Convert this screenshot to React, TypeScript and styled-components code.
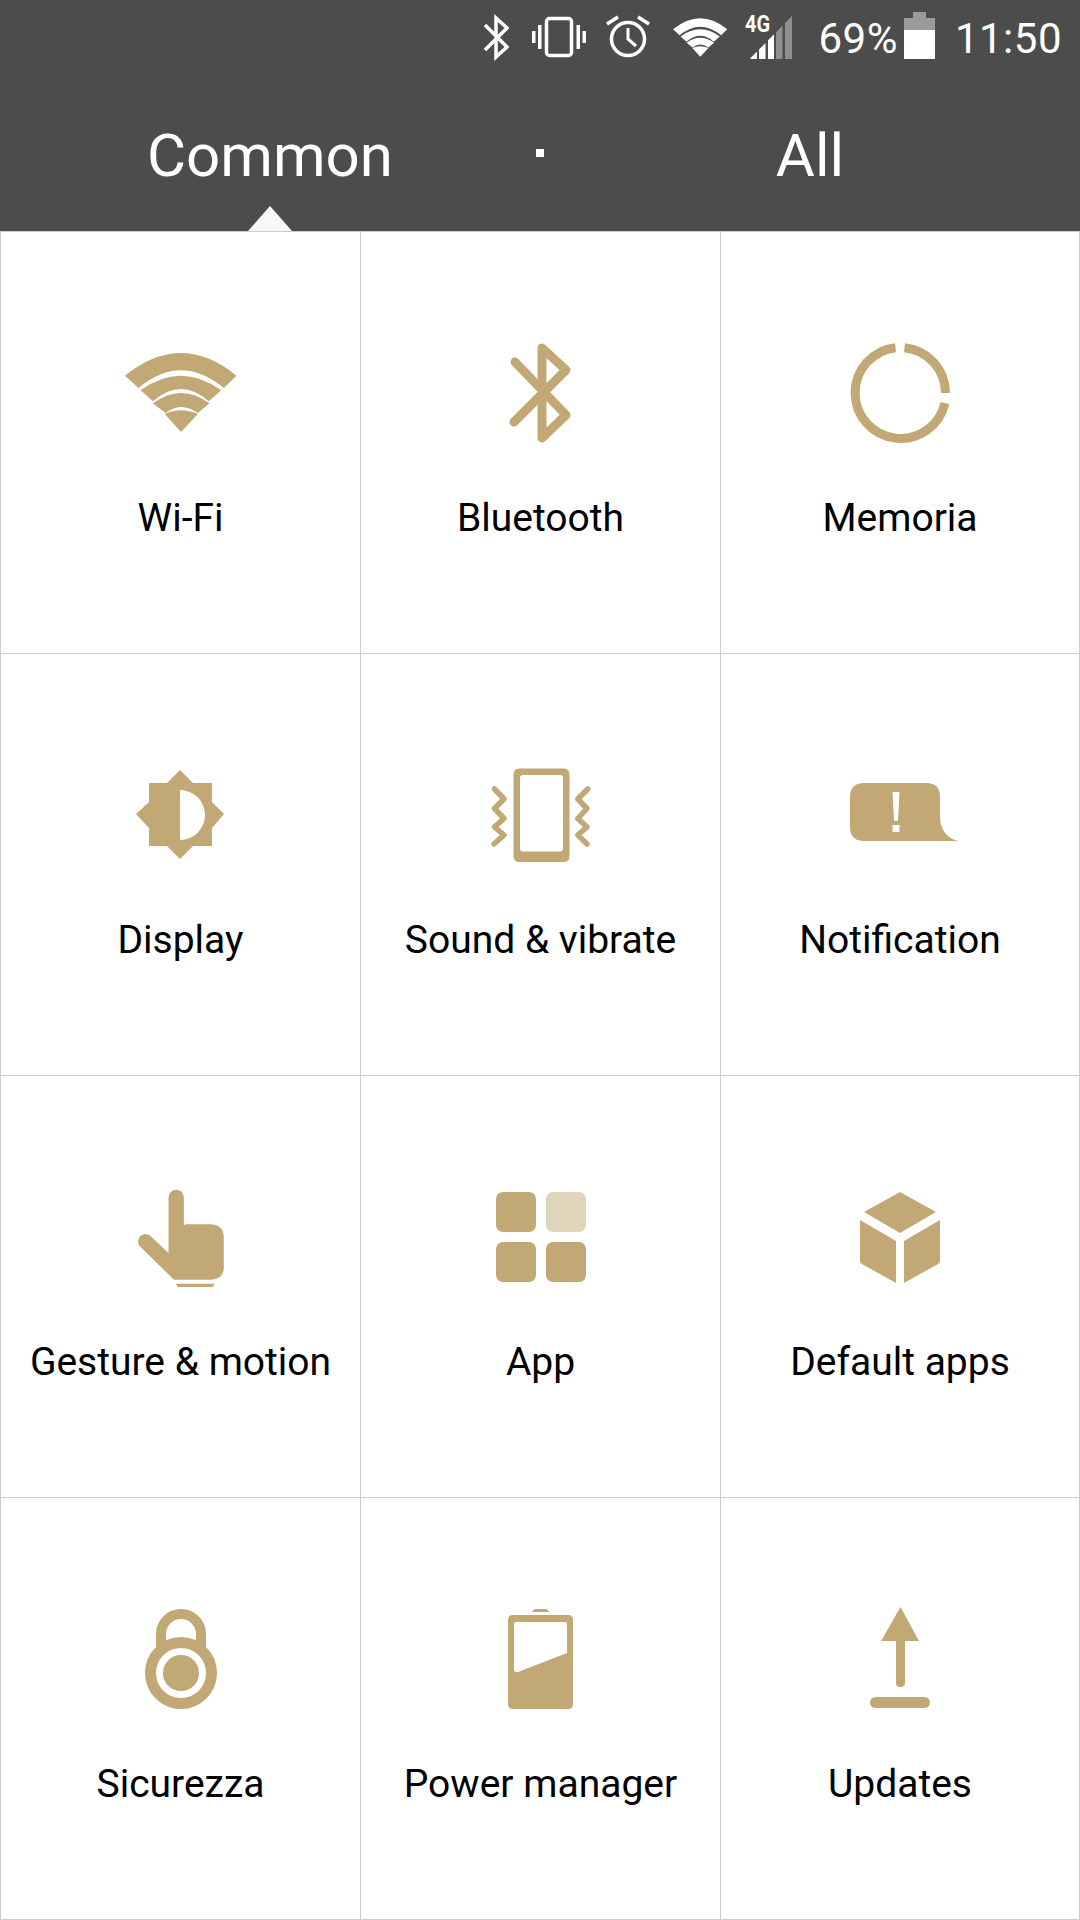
import React from "react";
import styled, { createGlobalStyle } from "styled-components";

const GOLD = "#c1a875";
const GOLD_LIGHT = "#e0d5bb";

const GlobalStyle = createGlobalStyle`
  html, body {
    margin: 0;
    padding: 0;
    background: #fff;
    font-family: Roboto, "Liberation Sans", sans-serif;
  }
`;

const Page = styled.div`
  width: 1080px;
  height: 1920px;
  overflow: hidden;
  background: #fff;
`;

const Header = styled.header`
  position: relative;
  height: 231px;
  background: #4c4c4c;
  color: #fff;
`;

const StatusBar = styled.div`
  display: flex;
  justify-content: flex-end;
  align-items: flex-start;
  height: 74px;
  padding-right: 18px;
`;

const StatusIcon = styled.svg<{ $gap: number }>`
  display: block;
  flex: none;
  height: 74px;
  margin-left: ${(p) => p.$gap}px;
`;

const StatusText = styled.span<{ $gap: number }>`
  display: block;
  margin-left: ${(p) => p.$gap}px;
  font-size: 42px;
  font-weight: 400;
  line-height: 78px;
  letter-spacing: 0.5px;
`;

const Tabs = styled.nav`
  display: grid;
  grid-template-columns: 1fr 1fr;
  position: relative;
  height: 157px;
`;

const Tab = styled.div`
  text-align: center;
  font-size: 60px;
  font-weight: 400;
  line-height: 163px;
`;

const TabDot = styled.span`
  position: absolute;
  left: 536px;
  top: 75px;
  width: 8px;
  height: 8px;
  background: #fff;
`;

const TabPointer = styled.span`
  position: absolute;
  left: 248px;
  bottom: 0;
  width: 44px;
  height: 25px;
  background: #f8f8f8;
  clip-path: polygon(50% 0, 100% 100%, 0 100%);
`;

const Grid = styled.main`
  display: grid;
  grid-template-columns: 360px 360px 359px;
  grid-auto-rows: 422px;
  border-top: 1px solid #cdcdcd;
  border-right: 1px solid #cdcdcd;
`;

const Cell = styled.div`
  display: flex;
  flex-direction: column;
  align-items: center;
  box-sizing: border-box;
  padding-top: 100px;
  border-left: 1px solid #cdcdcd;
  border-bottom: 1px solid #cdcdcd;
`;

const IconSvg = styled.svg.attrs<{ $shift?: number }>((p) => ({
  viewBox: `${1 - (p.$shift ?? 0)} 0 140 120`,
}))<{ $shift?: number }>`
  display: block;
  flex: none;
  width: 140px;
  height: 120px;
  fill: ${GOLD};
`;

const Label = styled.div`
  margin-top: 44px;
  font-size: 39px;
  line-height: 44px;
  color: #000;
  white-space: nowrap;
`;

const WifiBands = () => (
  <g>
    <path d="M15 43.7 Q71 -1.7 126.5 43.7 L113.8 56 Q71 20.6 28.5 56 Z" />
    <path d="M30.5 58.3 Q71 29.1 111.2 58.3 L98.8 69.3 Q71 44.7 43 69.3 Z" />
    <path d="M43 71.3 Q71 50.5 99.5 71.3 L87.8 81 Q71 69 55.5 81 Z" />
    <path d="M54.8 82 Q71 74.6 87.8 82 L71 100 Z" />
  </g>
);

const WifiIcon = () => (
  <IconSvg>
    <WifiBands />
  </IconSvg>
);

const BluetoothIcon = () => (
  <IconSvg>
    <path
      d="M45 30 L96 83 L72 106 V16 L96 38 L44 90"
      fill="none"
      stroke={GOLD}
      strokeWidth="9"
      strokeLinecap="round"
      strokeLinejoin="round"
    />
  </IconSvg>
);

const MemoryIcon = () => (
  <IconSvg $shift={1}>
    <g fill="none" stroke={GOLD} strokeWidth="9">
      <path d="M74.5 15.7 A45.5 45.5 0 0 1 115.5 61" />
      <path d="M115 71 A45.5 45.5 0 1 1 65.5 15.7" />
    </g>
  </IconSvg>
);

const DisplayIcon = () => (
  <IconSvg>
    <path d="M57 29 L70 16 L83 29 H102 V48 L114 60 L102 74 V92 H83 L70 105 L57 92 H39 V74 L26 60 L39 48 V29 Z" />
    <path d="M70 36 A25 25 0 0 1 70 86 Z" fill="#fff" />
  </IconSvg>
);

const SoundIcon = () => (
  <IconSvg>
    <path
      fillRule="evenodd"
      d="M49.5 14.5 H93.5 Q99.5 14.5 99.5 20.5 V102 Q99.5 108 93.5 108 H49.5 Q43.5 108 43.5 102 V20.5 Q43.5 14.5 49.5 14.5 Z M53 21 Q50 21 50 24 V94.5 Q50 97.5 53 97.5 H90 Q93 97.5 93 94.5 V24 Q93 21 90 21 Z"
    />
    <g fill="none" stroke={GOLD} strokeWidth="5.5" strokeLinecap="round" strokeLinejoin="round">
      <path d="M24.5 35 L34 45 L24.5 54.5 L34 64.5 L24.5 73 L34 81 L24 90" />
      <path d="M117.8 35 L107.8 45 L117 54.5 L107.8 64.5 L117 73 L107.8 81 L117 90" />
    </g>
  </IconSvg>
);

const NotificationIcon = () => (
  <IconSvg $shift={1}>
    <path d="M34 29 H96 Q110 29 110 43 V62 Q110 82 128 87 H34 Q20 87 20 73 V43 Q20 29 34 29 Z" />
    <path d="M62.5 38 H69.5 L68 67 H64 Z" fill="#fff" />
    <rect x="62.5" y="71" width="7" height="7" fill="#fff" />
  </IconSvg>
);

const GestureIcon = () => (
  <IconSvg>
    <path d="M58.5 21.4 A7.7 7.7 0 0 1 73.9 21.4 V49.3 L76 48.3 H100 Q113.8 48.3 113.8 62 V91 Q113.8 103.7 101 103.7 H64 L29.5 70 A7.5 7.5 0 0 1 40 59.5 L58.5 77 Z" />
    <path d="M66 107.7 H104.5 L103.5 110 Q103 111 102 111 H68.5 Q67.5 111 67 110 Z" />
  </IconSvg>
);

const AppIcon = () => (
  <IconSvg>
    <rect x="26" y="16" width="40" height="40" rx="7" />
    <rect x="76" y="16" width="40" height="40" rx="7" fill={GOLD_LIGHT} />
    <rect x="26" y="66" width="40" height="40" rx="7" />
    <rect x="76" y="66" width="40" height="40" rx="7" />
  </IconSvg>
);

const DefaultAppsIcon = () => (
  <IconSvg $shift={1}>
    <path d="M70 16 L106 36 L70 57 L34 36 Z" />
    <path d="M30 44 L66 65 V107 L32 88 Q30 87 30 85 Z" />
    <path d="M110 44 L74 65 V107 L108 88 Q110 87 110 85 Z" />
  </IconSvg>
);

const SecurityIcon = () => (
  <IconSvg>
    <path d="M51 52 V36 A20 20 0 0 1 91 36 V52" fill="none" stroke={GOLD} strokeWidth="10" />
    <circle cx="71" cy="75" r="30.5" fill="none" stroke={GOLD} strokeWidth="11" />
    <circle cx="71" cy="75" r="18" />
  </IconSvg>
);

const PowerIcon = () => (
  <IconSvg>
    <path d="M62 14 Q63 11 66 11 H75 Q78 11 79 14 Z" />
    <path
      fillRule="evenodd"
      d="M43 17 H98 Q103 17 103 22 V106 Q103 111 98 111 H43 Q38 111 38 106 V22 Q38 17 43 17 Z M46 24 Q44 24 44 26 V71 Q44 75 48 74 L97 55 V26 Q97 24 95 24 Z"
    />
  </IconSvg>
);

const UpdatesIcon = () => (
  <IconSvg $shift={1}>
    <path d="M70.5 9 L89 43 H75 V85 Q75 89 70.5 89 Q66 89 66 85 V43 H51 Z" />
    <rect x="40" y="99" width="60" height="11" rx="5.5" />
  </IconSvg>
);

const items = [
  { label: "Wi-Fi", Icon: WifiIcon },
  { label: "Bluetooth", Icon: BluetoothIcon },
  { label: "Memoria", Icon: MemoryIcon },
  { label: "Display", Icon: DisplayIcon },
  { label: "Sound & vibrate", Icon: SoundIcon },
  { label: "Notification", Icon: NotificationIcon },
  { label: "Gesture & motion", Icon: GestureIcon },
  { label: "App", Icon: AppIcon },
  { label: "Default apps", Icon: DefaultAppsIcon },
  { label: "Sicurezza", Icon: SecurityIcon },
  { label: "Power manager", Icon: PowerIcon },
  { label: "Updates", Icon: UpdatesIcon },
];

// top of a signal bar, the bars follow one rising diagonal
const signalTop = (x: number) => 59 - ((x - 5.6) * 43) / 42.4;
const signalBar = (a: number, b: number) =>
  `${a},59 ${a},${signalTop(a)} ${b},${signalTop(b)} ${b},59`;

const StatusIcons = () => (
  <StatusBar>
    <StatusIcon $gap={0} width="26" viewBox="0 0 26 74">
      <path d="M2 25 L24 47 L13 57 V18 L24 28 L2 50" fill="none" stroke="#fff" strokeWidth="3.5" />
    </StatusIcon>
    <StatusIcon $gap={23} width="54" viewBox="0 0 54 74" fill="#fff">
      <rect x="14.5" y="18.5" width="25" height="37" rx="3" fill="none" stroke="#fff" strokeWidth="3.5" />
      <rect x="0" y="31" width="3.5" height="12" />
      <rect x="6" y="25" width="3.5" height="24" />
      <rect x="44.5" y="25" width="3.5" height="24" />
      <rect x="50.5" y="31" width="3.5" height="12" />
    </StatusIcon>
    <StatusIcon $gap={20} width="44" viewBox="0 0 44 74">
      <g fill="none" stroke="#fff" strokeWidth="3.5">
        <circle cx="22" cy="39" r="16.5" />
        <path d="M22 28 V39 L30 46" strokeWidth="3" />
        <path d="M1 24 L12 17" />
        <path d="M43 24 L32 17" />
      </g>
    </StatusIcon>
    <StatusIcon $gap={23} width="54" viewBox="15 -16 111 151" fill="#fff">
      <WifiBands />
    </StatusIcon>
    <StatusIcon $gap={17} width="48" viewBox="0 0 48 74" fill="#fff">
      <text x="1" y="32" fontSize="23" fontWeight="700" fontFamily="Roboto, sans-serif" textLength="25" lengthAdjust="spacingAndGlyphs">
        4G
      </text>
      <polygon points={signalBar(6.5, 13)} />
      <polygon points={signalBar(15, 21.5)} />
      <polygon points={signalBar(24, 30)} />
      <polygon points={signalBar(32, 38.5)} fill="#8f8f8f" />
      <polygon points={signalBar(41, 48)} fill="#8f8f8f" />
    </StatusIcon>
    <StatusText $gap={26}>69%</StatusText>
    <StatusIcon $gap={6} width="31" viewBox="0 0 31 74">
      <rect x="9" y="12" width="13" height="6" fill="#9b9b9b" />
      <rect x="0" y="18" width="31" height="12" fill="#9b9b9b" />
      <rect x="0" y="30" width="31" height="29" fill="#fff" />
    </StatusIcon>
    <StatusText $gap={20}>11:50</StatusText>
  </StatusBar>
);

export default function App() {
  return (
    <Page>
      <GlobalStyle />
      <Header>
        <StatusIcons />
        <Tabs>
          <Tab>Common</Tab>
          <Tab>All</Tab>
          <TabDot />
        </Tabs>
        <TabPointer />
      </Header>
      <Grid>
        {items.map(({ label, Icon }) => (
          <Cell key={label}>
            <Icon />
            <Label>{label}</Label>
          </Cell>
        ))}
      </Grid>
    </Page>
  );
}
